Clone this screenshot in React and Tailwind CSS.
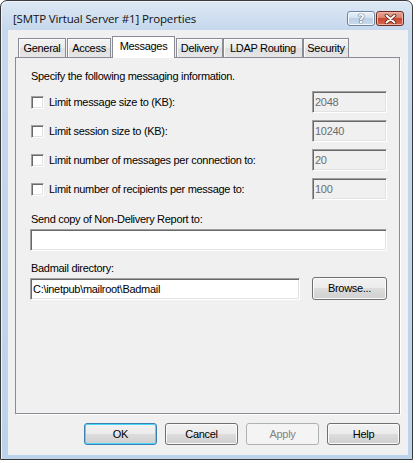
import React from "react";

// --- 탭 / 행 데이터 ---
const TABS = [
  { label: "General", cls: "ml-[3px] w-[48px]" },
  { label: "Access", cls: "ml-[1px] w-[44px]" },
  { label: "Messages", cls: "ml-[1px] w-[63px]", selected: true },
  { label: "Delivery", cls: "ml-[1px] w-[47px]" },
  { label: "LDAP Routing", cls: "w-[80px]" },
  { label: "Security", cls: "w-[46px]" },
];

const LIMITS = [
  { label: "Limit message size to (KB):", value: "2048" },
  { label: "Limit session size to (KB):", value: "10240" },
  { label: "Limit number of messages per connection to:", value: "20" },
  { label: "Limit number of recipients per message to:", value: "100" },
];

const sunken =
  "border border-t-[#a0a0a0] border-l-[#a0a0a0] border-r-white border-b-white shadow-[inset_1px_1px_0_#696969,inset_-1px_-1px_0_#e3e3e3]";

const btnFace =
  "bg-[linear-gradient(to_bottom,#f2f2f2,#ebebeb_50%,#dddddd_50%,#cfcfcf)]";

function Button({ children, variant }) {
  if (variant === "disabled") {
    return (
      <div className="w-[73px] h-[22px] rounded-[3px] border border-[#adb2b5] bg-[#f4f4f4] flex items-center justify-center text-[#838383]">
        {children}
      </div>
    );
  }
  if (variant === "default") {
    return (
      <div
        className={`w-[73px] h-[22px] rounded-[3px] border border-[#3c7fb1] ${btnFace} shadow-[inset_0_0_0_1px_#48d8fb] flex items-center justify-center text-black`}
      >
        {children}
      </div>
    );
  }
  return (
    <div
      className={`w-[73px] h-[22px] rounded-[3px] border border-[#707070] ${btnFace} shadow-[inset_0_0_0_1px_#fbfbfb] flex items-center justify-center text-black`}
    >
      {children}
    </div>
  );
}

export default function App() {
  return (
    <div className="w-[417px] h-[463px] bg-white font-['Liberation_Sans',Arial,sans-serif] text-[11px] tracking-[-0.3px] text-black">
      <div className="w-[413px] h-[460px] rounded-t-[7px] border border-[#3a3a3a] bg-[linear-gradient(to_bottom,#dde8f4,#c6d8ed_29px,#bdd3ea)] shadow-[inset_1px_1px_0_#eef4fb] flex flex-col">
        {/* 타이틀 바 */}
        <div className="h-[29px] flex items-start shrink-0">
          <div className="pl-[12px] pt-[8px] leading-[20px] text-[11.5px] tracking-[-0.15px] text-[#111] font-['Open_Sans',sans-serif]">
            [SMTP Virtual Server #1] Properties
          </div>
          <div className="ml-auto mr-[8px] mt-[10px] flex gap-[1px]">
            <div className="w-[28px] h-[15px] rounded-[3px] border border-[#6f83a0] bg-[linear-gradient(to_bottom,#e9f0f8,#d3e0ef_50%,#bccfe6_50%,#c8d9ec)] shadow-[inset_0_0_0_1px_#f4f8fc] flex items-center justify-center">
              <span className="font-['DejaVu_Sans',sans-serif] font-bold text-[12px] leading-none text-white [text-shadow:0_0_1px_#2b3a52,0_0_1px_#2b3a52]">
                ?
              </span>
            </div>
            <div className="w-[28px] h-[15px] rounded-[3px] border border-[#6b2b20] bg-[linear-gradient(to_bottom,#e6a597,#d9806c_50%,#c8482f_50%,#d46a4f)] shadow-[inset_0_0_0_1px_#eeb3a6] flex items-center justify-center">
              <svg width="13" height="10" viewBox="0 0 13 10">
                <path d="M2.5 1.5 L10.5 8.5 M10.5 1.5 L2.5 8.5" stroke="#5a1d12" strokeWidth="3.6" strokeLinecap="round" />
                <path d="M2.5 1.5 L10.5 8.5 M10.5 1.5 L2.5 8.5" stroke="#ffffff" strokeWidth="2" strokeLinecap="round" />
              </svg>
            </div>
          </div>
        </div>

        {/* 클라이언트 영역 */}
        <div className="ml-[7px] mr-[4px] h-[425px] bg-[#f0f0f0] flex flex-col">
          <div className="relative z-10 ml-[7px] mt-[6px] h-[21px] flex items-end">
            {TABS.map((t) =>
              t.selected ? (
                <div
                  key={t.label}
                  className={`${t.cls} h-[22px] -mb-px border border-b-0 border-[#898c95] bg-white flex items-center justify-center pb-[2px]`}
                >
                  {t.label}
                </div>
              ) : (
                <div
                  key={t.label}
                  className={`${t.cls} h-[19px] border border-b-0 border-[#898c95] bg-[linear-gradient(to_bottom,#f3f3f3,#ebebeb_50%,#dedede_50%,#e6e6e6)] shadow-[inset_1px_1px_0_#fcfcfc] flex items-center justify-center`}
                >
                  {t.label}
                </div>
              )
            )}
          </div>

          <div className="ml-[7px] w-[385px] h-[357px] border border-[#898c95] bg-[#f0f0f0] shadow-[1px_1px_0_#ffffff] pl-[15px] pr-[12px] pt-[11px] flex flex-col">
            <div className="leading-[14px]">
              Specify the following messaging information.
            </div>

            <div className="mt-[8px] flex flex-col gap-[7px]">
              {LIMITS.map((r) => (
                <div key={r.label} className="h-[22px] flex items-center">
                  <div className={`w-[13px] h-[13px] bg-white ${sunken}`} />
                  <div className="ml-[5px] leading-[14px]">{r.label}</div>
                  <div
                    className={`ml-auto w-[75px] h-[22px] bg-[#f0f0f0] ${sunken} pl-[2px] flex items-center text-[#6d6d6d]`}
                  >
                    {r.value}
                  </div>
                </div>
              ))}
            </div>

            <div className="mt-[12px] leading-[14px]">
              Send copy of Non-Delivery Report to:
            </div>
            <div className={`mt-[3px] -ml-px w-[357px] h-[22px] bg-white ${sunken}`} />

            <div className="mt-[10px] leading-[14px]">Badmail directory:</div>
            <div className="mt-[2px] -ml-px flex items-start">
              <div
                className={`mt-[1px] w-[270px] h-[22px] bg-white ${sunken} pl-[2px] flex items-center`}
              >
                C:\inetpub\mailroot\Badmail
              </div>
              <div className="ml-[12px]">
                <div
                  className={`w-[75px] h-[23px] rounded-[3px] border border-[#707070] ${btnFace} shadow-[inset_0_0_0_1px_#fbfbfb] flex items-center justify-center`}
                >
                  Browse...
                </div>
              </div>
            </div>
          </div>

          <div className="mt-[9px] pr-[8px] flex justify-end gap-[8px]">
            <Button variant="default">OK</Button>
            <Button>Cancel</Button>
            <Button variant="disabled">Apply</Button>
            <Button>Help</Button>
          </div>
        </div>
      </div>
    </div>
  );
}
